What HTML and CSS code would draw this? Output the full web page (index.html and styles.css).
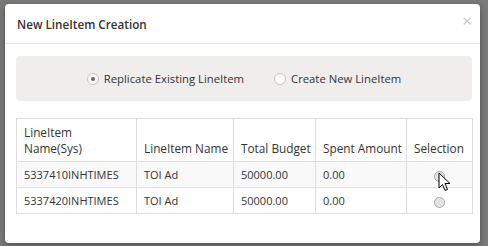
FILE: index.html
```html
<!DOCTYPE html>
<html lang="en">
<head>
<meta charset="UTF-8">
<title>New LineItem Creation</title>
<link rel="stylesheet" href="styles.css">
</head>
<body>
  <div class="modal">
    <div class="modal-header">
      <h4 class="modal-title">New LineItem Creation</h4>
      <span class="close">&times;</span>
    </div>
    <div class="modal-body">
      <div class="mode-panel">
        <label class="mode-option">
          <span class="radio checked"></span>
          Replicate Existing LineItem
        </label>
        <label class="mode-option">
          <span class="radio"></span>
          Create New LineItem
        </label>
      </div>
      <table class="items">
        <thead>
          <tr>
            <th class="col-sys">LineItem<br>Name(Sys)</th>
            <th class="col-name">LineItem Name</th>
            <th class="col-budget">Total Budget</th>
            <th class="col-spent">Spent Amount</th>
            <th class="col-sel">Selection</th>
          </tr>
        </thead>
        <tbody>
          <tr class="odd">
            <td>5337410INHTIMES</td>
            <td>TOI Ad</td>
            <td>50000.00</td>
            <td>0.00</td>
            <td class="sel">
              <span class="row-radio"></span>
              <svg class="cursor" width="14" height="21" viewBox="0 0 14 21">
                <path d="M1 1 L1 16 L4.5 12.5 L7 18.5 L9.5 17.5 L7 11.5 L12 11.5 Z" fill="#fff" stroke="#000" stroke-width="1" stroke-linejoin="round"/>
              </svg>
            </td>
          </tr>
          <tr>
            <td>5337420INHTIMES</td>
            <td>TOI Ad</td>
            <td>50000.00</td>
            <td>0.00</td>
            <td class="sel"><span class="row-radio"></span></td>
          </tr>
        </tbody>
      </table>
    </div>
  </div>
</body>
</html>
```

FILE: styles.css
```css
body {
  margin: 0;
  height: 246px;
  overflow: hidden;
  background-color: #7a7a79;
  font-family: "Open Sans", Arial, sans-serif;
  color: #333;
}

.modal {
  margin: 4px 0 0 5px;
  width: 475px;
  height: 239px;
  background-color: #fff;
  border-radius: 4px;
  box-shadow: 0 2px 6px rgba(0, 0, 0, 0.35);
}

.modal-header {
  display: flex;
  justify-content: space-between;
  align-items: center;
  height: 39px;
  padding: 0 8px 0 12px;
  border-bottom: 1px solid #e5e5e5;
}

.modal-title {
  margin: 0;
  font-size: 11.7px;
  font-weight: 600;
  color: #333;
}

.close {
  font-size: 17px;
  color: #c8c8c8;
  line-height: 1;
  margin-top: -6px;
}

.modal-body {
  padding: 12px 8px 0 11px;
}

.mode-panel {
  display: flex;
  justify-content: center;
  align-items: center;
  gap: 30px;
  height: 45px;
  background-color: #efeeed;
  border-radius: 4px;
  font-size: 11.3px;
  color: #333;
}

.mode-option {
  display: flex;
  align-items: center;
  gap: 5px;
}

.radio {
  width: 10px;
  height: 10px;
  border: 1px solid #c4c4c4;
  border-radius: 50%;
  background-color: #fafafa;
  display: flex;
  justify-content: center;
  align-items: center;
}

.radio.checked::after {
  content: "";
  width: 4px;
  height: 4px;
  border-radius: 50%;
  background-color: #666;
}

.items {
  margin-top: 17px;
  width: 457px;
  table-layout: fixed;
  border-collapse: collapse;
  border: 1px solid #ddd;
}

.items th,
.items td {
  border: 1px solid #ddd;
  text-align: left;
  padding: 0 7px;
  white-space: nowrap;
}

.items th {
  font-size: 11.8px;
  font-weight: 400;
  line-height: 16px;
  vertical-align: bottom;
  height: 43px;
  padding-bottom: 5px;
  box-sizing: border-box;
}

.items td {
  font-size: 11px;
  height: 25px;
}

.items tr.odd td {
  background-color: #f9f9f9;
}

.col-sys { width: 120px; }
.col-name { width: 97px; }
.col-budget { width: 82px; }
.col-spent { width: 91px; }

.items td.sel {
  position: relative;
  text-align: center;
}

.row-radio {
  display: inline-block;
  width: 9px;
  height: 9px;
  border: 1px solid #aaa;
  border-radius: 50%;
  background-color: #e4e4e4;
  vertical-align: middle;
}

.cursor {
  position: absolute;
  left: 31px;
  top: 10px;
}
```
